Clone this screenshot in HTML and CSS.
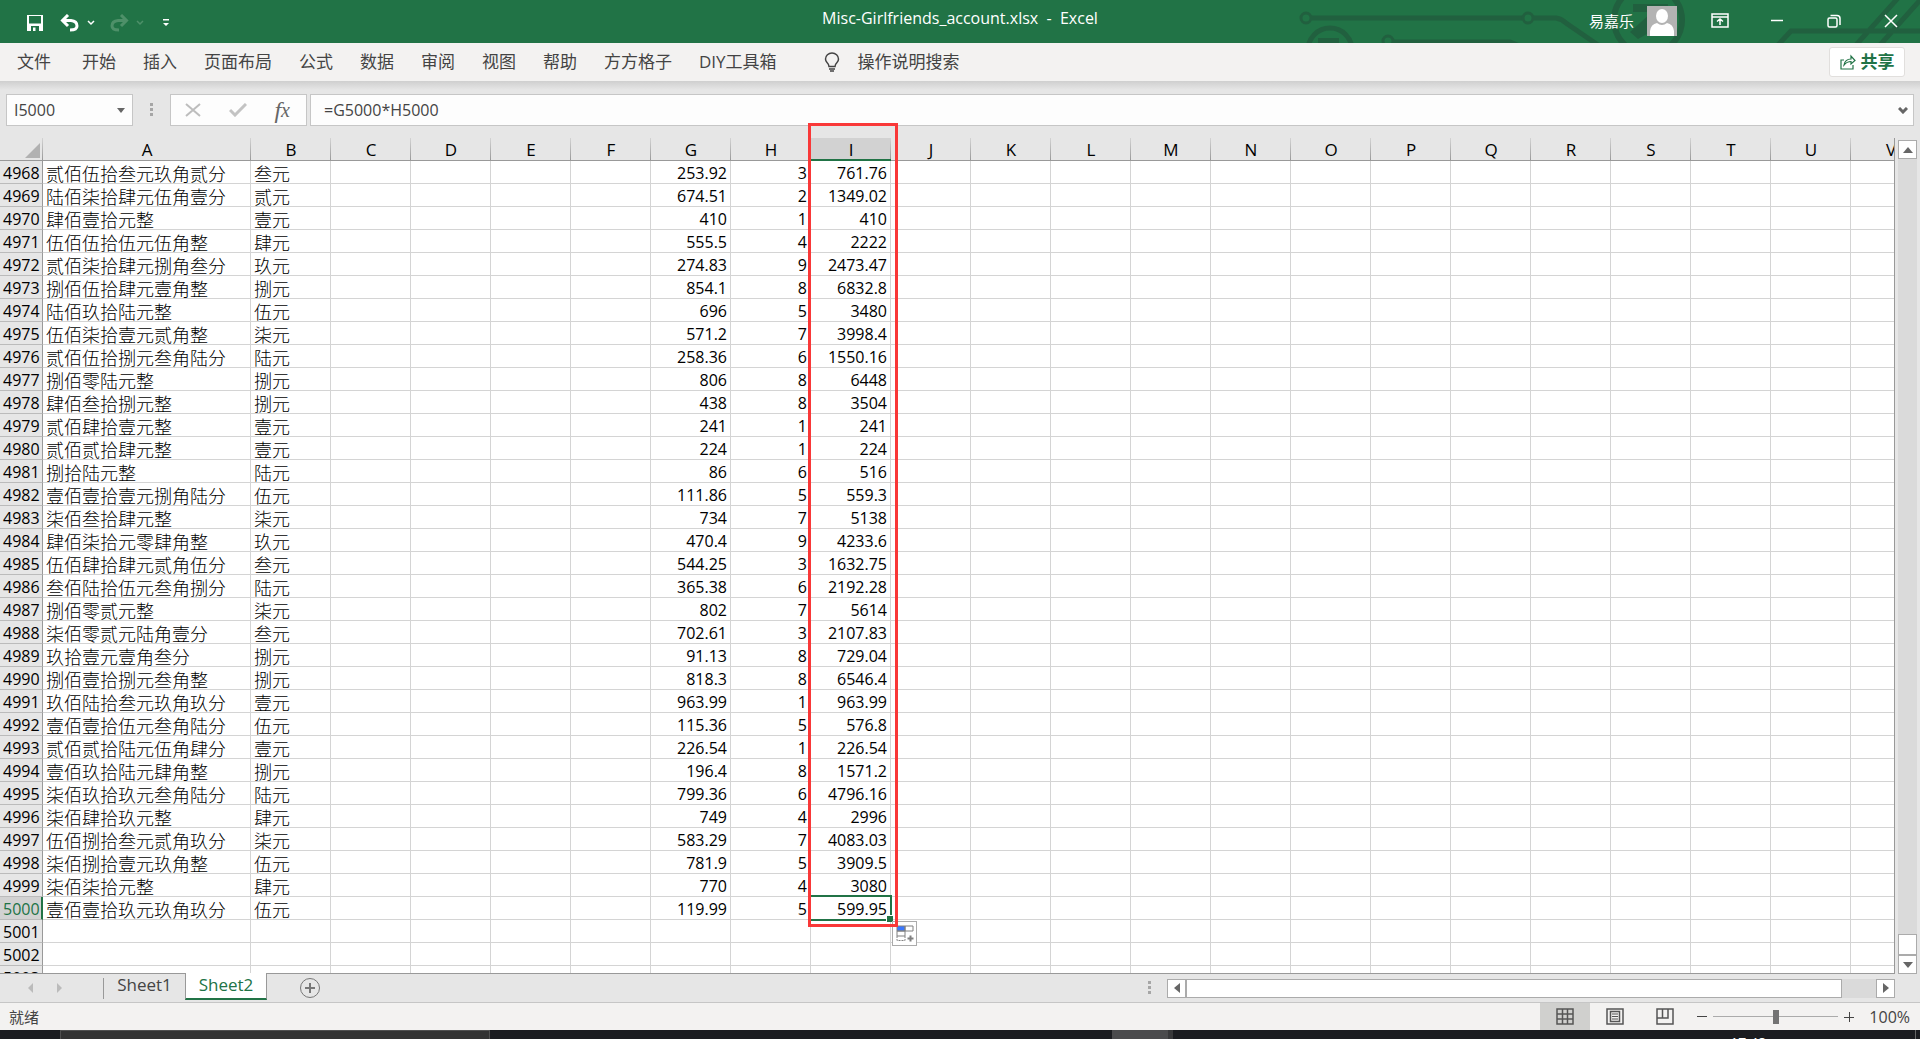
FILE: index.html
```html
<!DOCTYPE html>
<html lang="zh-CN">
<head>
<meta charset="utf-8">
<title>Misc-Girlfriends_account.xlsx - Excel</title>
<link rel="stylesheet" href="styles.css">
</head>
<body>
<header class="titlebar">
  <svg class="circuit" viewBox="0 0 640 43" width="640" height="43" fill="none" stroke="#21603f" stroke-width="5" aria-hidden="true">
    <circle cx="26" cy="18" r="5" stroke-width="3"/><path d="M32 18H242"/><circle cx="248" cy="18" r="5" stroke-width="3"/><path d="M254 18H276Q282 19 286 23L318 45"/>
    <circle cx="50" cy="50" r="22"/><path d="M38 38H59V43H38Z" fill="#21603f" stroke="none"/>
    <circle cx="108" cy="41" r="5" stroke-width="3"/><path d="M114 42H230L244 48"/>
    <circle cx="368" cy="20" r="34" stroke-width="6"/><path d="M353 4H388V22L358 39L350 32L372 12H353Z" fill="#21603f" stroke="none"/>
    <path d="M498 45L511 31H640M576 45L618 -2M600 45L642 -2"/>
  </svg>
  <div class="quick">
    <button aria-label="保存"><svg width="18" height="18" viewBox="0 0 18 18"><path d="M1 1H17V17H1Z" fill="#fff"/><path d="M3 2H15V9.500H3ZM5 12H13V17H5Z" fill="#217346"/><path d="M7 13.500H9.500V17H7Z" fill="#fff"/></svg></button>
    <button class="undo" aria-label="撤消"><svg width="20" height="18" viewBox="0 0 20 18" fill="none" stroke="#fff" stroke-width="3"><path d="M3 6.500H11Q17 7 17 12Q17 16 10 16"/><path d="M8 1L2.500 6.500L8 12"/></svg></button>
    <button aria-label="撤消列表"><svg width="8" height="6" viewBox="0 0 8 6" fill="none" stroke="#fff" stroke-width="1.500"><path d="M1 1L4 4L7 1"/></svg></button>
    <button class="redo" aria-label="恢复" disabled><svg width="20" height="18" viewBox="0 0 20 18" fill="none" stroke="#4e9069" stroke-width="3"><path d="M17 6.500H9Q3 7 3 12Q3 16 10 16"/><path d="M12 1L17.500 6.500L12 12"/></svg></button>
    <button aria-label="恢复列表" disabled><svg width="8" height="6" viewBox="0 0 8 6" fill="none" stroke="#4e9069" stroke-width="1.500"><path d="M1 1L4 4L7 1"/></svg></button>
    <button class="custom" aria-label="自定义快速访问工具栏"><svg width="8" height="8" viewBox="0 0 8 8" fill="#fff"><path d="M1 0H7V1.500H1ZM1 4H7L4 7Z"/></svg></button>
  </div>
  <div class="doc-title">Misc-Girlfriends_account.xlsx&nbsp; -&nbsp; Excel</div>
  <div class="window-tools">
    <span class="user">易嘉乐</span>
    <svg class="avatar" width="30" height="30" viewBox="0 0 30 30"><path d="M0 0H30V30H0Z" fill="#b3b3b3"/><ellipse cx="15" cy="10" rx="6" ry="7" fill="#fff"/><path d="M3 30V25Q4 18 10 17Q15 21 20 17Q26 18 27 25V30Z" fill="#fff"/></svg>
    <button aria-label="功能区显示选项"><svg width="18" height="16" viewBox="0 0 18 16" fill="none" stroke="#fff" stroke-width="1.500"><path d="M1 1H17V14H1ZM1 4H17M9 12V6M6 8.500L9 6L12 8.500"/></svg></button>
    <button aria-label="最小化"><svg width="14" height="14" viewBox="0 0 14 14" stroke="#fff" stroke-width="1.500"><path d="M1 6.500H13"/></svg></button>
    <button aria-label="还原"><svg width="14" height="14" viewBox="0 0 14 14" fill="none" stroke="#fff" stroke-width="1.500"><rect x="1" y="4" width="9" height="9" rx="1.500"/><path d="M3.500 1.500H10Q13 1.500 13 4.500V11"/></svg></button>
    <button aria-label="关闭"><svg width="14" height="14" viewBox="0 0 14 14" stroke="#fff" stroke-width="1.500"><path d="M1 1L13 13M13 1L1 13"/></svg></button>
  </div>
</header>
<nav class="ribbon">
  <button class="file">文件</button><button>开始</button><button>插入</button><button>页面布局</button><button>公式</button><button>数据</button><button>审阅</button><button>视图</button><button>帮助</button><button>方方格子</button><button>DIY工具箱</button>
  <button class="tell"><svg width="16" height="20" viewBox="0 0 16 20" fill="none" stroke="#444" stroke-width="1.500"><path d="M5 14.500Q5 12.500 3 10.500Q1.500 9 1.500 7A6.500 6 0 0 1 14.500 7Q14.500 9 13 10.500Q11 12.500 11 14.500ZM5 17H11M6 19H10"/></svg>操作说明搜索</button>
  <button class="share"><svg width="16" height="16" viewBox="0 0 16 16" fill="none" stroke="#217346" stroke-width="1.200"><path d="M4 6H1V15H13V11M4 11Q5 5 11 5V2L15 6.500L11 10V7.500Q7 7.500 4 11Z"/></svg>共享</button>
</nav>
<div class="formula-row">
  <div class="namebox"><input value="I5000" aria-label="名称框"><button aria-label="名称列表"><svg width="8" height="5" viewBox="0 0 8 5" fill="#666"><path d="M0 0H8L4 5Z"/></svg></button></div>
  <span class="dots"></span>
  <div class="fxbox">
    <button aria-label="取消"><svg width="16" height="14" viewBox="0 0 16 14" stroke="#bdbdbd" stroke-width="2"><path d="M1 1L15 13M15 1L1 13"/></svg></button>
    <button aria-label="输入"><svg width="18" height="14" viewBox="0 0 18 14" fill="none" stroke="#c3c3c3" stroke-width="3"><path d="M1 7L6 12L17 1"/></svg></button>
    <button class="fx" aria-label="插入函数">f<span>x</span></button>
  </div>
  <div class="formula"><input value="=G5000*H5000" aria-label="编辑栏"><button aria-label="展开编辑栏"><svg width="10" height="7" viewBox="0 0 10 7" fill="none" stroke="#666" stroke-width="3"><path d="M1 1L5 5L9 1"/></svg></button></div>
</div>
<main class="workspace">
  <div class="sheet">
    <div class="viewport"><table class="cells"><colgroup id="cols"></colgroup><thead><tr id="letters"></tr></thead><tbody id="rows"></tbody></table></div>
    <div class="selection"></div>
    <button class="autofill" aria-label="自动填充选项"><svg width="18" height="17" viewBox="0 0 18 17" fill="none" stroke="#808080"><path d="M1 1H9V6H1Z" fill="#3b78ff"/><path d="M9 1H17V6H9ZM1 6H9V11H1Z"/><path d="M1 11V15.500H9V11" stroke-dasharray="2 1"/><path d="M14.500 10.500V16.500M11.500 13.500H17.500" stroke-width="2"/></svg></button>
    <div class="callout"></div>
  </div>
  <div class="vscroll">
    <button aria-label="向上"><svg width="10" height="6" viewBox="0 0 10 6" fill="#666"><path d="M0 6H10L5 0Z"/></svg></button>
    <span class="vtrack"><span class="vthumb"></span></span>
    <button aria-label="向下"><svg width="10" height="6" viewBox="0 0 10 6" fill="#666"><path d="M0 0H10L5 6Z"/></svg></button>
  </div>
</main>
<div class="tabbar">
  <div class="tab-nav"><button aria-label="上一张"><svg width="5" height="10" viewBox="0 0 5 10" fill="#bbb"><path d="M5 0V10L0 5Z"/></svg></button><button aria-label="下一张"><svg width="5" height="10" viewBox="0 0 5 10" fill="#bbb"><path d="M0 0V10L5 5Z"/></svg></button></div>
  <button class="tab">Sheet1</button><button class="tab active">Sheet2</button>
  <button class="add" aria-label="新工作表"><svg width="22" height="22" viewBox="0 0 22 22" fill="none" stroke="#777"><circle cx="11" cy="11" r="9.500"/><path d="M11 6V16M6 11H16" stroke-width="2"/></svg></button>
  <span class="dots"></span>
  <div class="hscroll">
    <button aria-label="向左"><svg width="6" height="10" viewBox="0 0 6 10" fill="#666"><path d="M6 0V10L0 5Z"/></svg></button>
    <span class="htrack"><span class="hthumb"></span></span>
    <button aria-label="向右"><svg width="6" height="10" viewBox="0 0 6 10" fill="#666"><path d="M0 0V10L6 5Z"/></svg></button>
  </div>
</div>
<footer class="status">
  <span>就绪</span>
  <div class="views">
    <button class="on" aria-label="普通"><svg width="18" height="17" viewBox="0 0 18 17" fill="none" stroke="#555" stroke-width="1.500"><path d="M1 1H17V16H1ZM1 6H17M1 11H17M6.500 1V16M11.500 1V16"/></svg></button>
    <button aria-label="页面布局"><svg width="18" height="17" viewBox="0 0 18 17" fill="none" stroke="#555" stroke-width="1.500"><path d="M1 1H17V16H1ZM4.500 3.500H13.500V13.500H4.500Z"/><path d="M6 6H12M6 8.500H12M6 11H12" stroke-width="1"/></svg></button>
    <button aria-label="分页预览"><svg width="18" height="17" viewBox="0 0 18 17" fill="none" stroke="#555" stroke-width="1.500"><path d="M1 1H17V16H1ZM1 10H12V1M6.500 1V10"/></svg></button>
  </div>
  <div class="zoom"><button aria-label="缩小"><svg width="10" height="10" stroke="#444"><path d="M0 4.500H10"/></svg></button><input type="range" min="0" max="100" value="50" aria-label="缩放"><button aria-label="放大"><svg width="10" height="10" stroke="#444"><path d="M0 5.500H10M5.500 0V10"/></svg></button></div>
  <span class="percent">100%</span>
</footer>
<div class="taskbar"><span class="task-search"></span><span class="task-app"></span><span class="clock">17:48</span><span class="peek"></span></div>
<script src="sheet.js"></script>
</body>
</html>
```
FILE: styles.css
```css
* { box-sizing: border-box; }
body { margin: 0; height: 100vh; display: flex; flex-direction: column; overflow: hidden; background: #e6e6e6; color: #444; font: 16px/22px "Open Sans", "Noto Sans CJK SC", sans-serif; }
button { border: 0; padding: 0; background: none; color: inherit; font: inherit; display: flex; align-items: center; justify-content: center; white-space: nowrap; }
input { border: 0; padding: 0; margin: 0; background: none; color: inherit; font: inherit; min-width: 0; }
svg { display: block; flex: none; }

.titlebar { flex: none; height: 43px; background: #217346; color: #fff; position: relative; display: grid; grid-template-columns: 1fr auto 1fr; align-items: center; }
.circuit { position: absolute; right: 0; top: 0; }
.quick { display: flex; align-items: center; padding: 2px 0 0 26px; }
.quick .undo { margin-left: 16px; }
.quick .undo + button, .quick .redo + button { margin-left: 7px; }
.quick .redo { margin-left: 14px; }
.quick .custom { margin-left: 18px; }
.doc-title { font-size: 16px; padding-bottom: 8px; }
.window-tools { display: flex; align-items: center; justify-content: flex-end; position: relative; padding: 0 20px 1px 0; }
.window-tools button { width: 18px; margin-left: 39px; }
.window-tools .avatar + button { margin-left: 34px; }
.user { font-size: 15px; margin-right: 13px; }

.ribbon { flex: none; height: 38px; background: #f3f2f1; display: flex; align-items: center; gap: 27px; padding: 0 15px 0 17px; font-size: 17px; }
.ribbon .file { margin-right: 4px; }
.ribbon .tell { gap: 18px; margin-left: 20px; }
.ribbon .share { margin-left: auto; width: 76px; height: 30px; background: #fff; border: 1px solid #e1dfdd; border-radius: 3px; color: #217346; font-weight: 700; gap: 5px; }

.formula-row { flex: none; display: flex; align-items: center; padding: 13px 6px 12px; background: linear-gradient(#cfcfcf, #e6e6e6 9px); }
.namebox, .fxbox, .formula { height: 32px; background: #fdfdfd; border: 1px solid #c6c6c6; display: flex; align-items: center; }
.namebox { width: 127px; padding: 0 7px; }
.namebox input, .formula input { flex: 1; }
.dots { width: 3px; height: 14px; background: repeating-linear-gradient(#a6a6a6 0 3px, transparent 3px 5px); }
.formula-row .dots { margin: 0 17px; }
.fxbox { width: 137px; padding: 0 16px 0 14px; justify-content: space-between; }
.fx { font: italic 24px/26px "Liberation Serif", serif; color: #666; }
.fx span { font-size: 20px; }
.formula { flex: 1; margin-left: 3px; padding: 0 5px 0 13px; }

.workspace { flex: 1; min-height: 0; display: flex; }
.sheet { flex: 1; min-width: 0; position: relative; border-right: 1px solid #999; border-bottom: 1px solid #999; }
.viewport { height: 100%; overflow: hidden; }
.cells { table-layout: fixed; border-collapse: separate; border-spacing: 0; width: 1931px; color: #000; background: #fff; }
.cells .num-col { width: 43px; }
.cells .wide-col { width: 208px; }
.cells .col { width: 80px; }
.cells th, .cells td { padding: 2px 3px 0; height: 23px; line-height: 20px; font-weight: 400; border-right: 1px solid #d4d4d4; border-bottom: 1px solid #d4d4d4; white-space: nowrap; }
.cells thead th { background: linear-gradient(#d4d4d4, #999) right / 1px 100% no-repeat #e6e6e6; border-right: 0; border-bottom-color: #999; font-size: 17px; }
.cells thead .sel { background-color: #d2d2d2; border-bottom: 2px solid #217346; line-height: 19px; }
.cells .corner svg { margin-left: auto; }
.cells tbody th { background: #e6e6e6; text-align: right; border-right-color: #999; border-bottom-color: #bbb; }
.cells tbody .sel { background: #d2d2d2; color: #217346; border-right: 2px solid #217346; padding-right: 2px; }
.cells .text { font-size: 18px; font-weight: 300; font-family: "Noto Sans CJK SC", sans-serif; }
.cells .number { text-align: right; }
.selection { position: absolute; left: 809px; top: 757px; width: 83px; height: 26px; border: 2px solid #217346; }
.selection::after { content: ""; position: absolute; right: -3px; bottom: -3px; width: 6px; height: 6px; background: #217346; border: 1px solid #fff; border-width: 1px 0 0 1px; }
.autofill { position: absolute; left: 892px; top: 783px; width: 25px; height: 25px; background: #fff; border: 1px solid #ababab; }
.callout { position: absolute; left: 808px; top: -15px; width: 90px; height: 804px; border: 3px solid #f93838; }
.vscroll { flex: none; width: 25px; padding: 2px 3px 0; display: flex; flex-direction: column; }
.vscroll button { height: 19px; background: #fff; border: 1px solid #ababab; }
.vtrack { flex: 1; background: #dadada; display: flex; flex-direction: column; justify-content: flex-end; }
.vthumb { height: 21px; background: #fff; border: 1px solid #ababab; }

.tabbar { flex: none; height: 29px; display: flex; align-items: center; border-bottom: 1px solid #c6c6c6; padding-right: 25px; }
.tab-nav { width: 104px; height: 21px; border-right: 1px solid #999; display: flex; gap: 24px; padding-left: 28px; }
.tab { width: 81px; height: 26px; align-self: flex-start; font-size: 17px; padding-bottom: 4px; }
.tab.active { width: 82px; background: #fff; color: #217346; border: 1px solid #999; border-top: 0; border-bottom: 2px solid #217346; padding-bottom: 2px; margin-top: -1px; height: 27px; position: relative; }
.add { margin-left: 32px; }
.tabbar > .dots { margin: 0 16px 0 auto; }
.hscroll { width: 38.4%; height: 19px; display: flex; }
.hscroll button { width: 19px; background: #fff; border: 1px solid #ababab; }
.htrack { flex: 1; background: #dadada; display: flex; }
.hthumb { width: 95%; background: #fff; border: 1px solid #ababab; }

.status { flex: none; height: 27px; background: #f3f2f1; display: flex; align-items: center; padding: 0 10px 0 9px; font-size: 15px; }
.views { margin-left: auto; display: flex; align-self: stretch; }
.views button { width: 50px; }
.views .on { background: #d0d0ce; }
.zoom { display: flex; align-items: center; gap: 6px; margin-left: 7px; }
.zoom input { appearance: none; width: 125px; height: 14px; background: linear-gradient(#ababab, #ababab) center / 100% 1px no-repeat; }
.zoom input::-webkit-slider-thumb { appearance: none; width: 6px; height: 14px; background: #737373; }
.percent { width: 56px; text-align: right; font-size: 16px; }

.taskbar { flex: none; height: 9px; background: #1b1c20; display: flex; overflow: hidden; color: #fff; }
.task-search { width: 430px; margin-left: 60px; background: #333; border: 1px solid #505050; border-bottom: 0; }
.task-app { width: 61px; margin-left: 622px; background: #4b4b4d; border-right: 5px solid #38383a; }
.clock { margin-left: auto; font-size: 14px; line-height: 22px; padding-top: 2px; }
.peek { width: 5px; margin-left: 149px; border-left: 1px solid #666; }
```
FILE: sheet.js
```js
const letters = "ABCDEFGHIJKLMNOPQRSTUV".split("");
const data = `贰佰伍拾叁元玖角贰分,叁元,253.92,3,761.76
陆佰柒拾肆元伍角壹分,贰元,674.51,2,1349.02
肆佰壹拾元整,壹元,410,1,410
伍佰伍拾伍元伍角整,肆元,555.5,4,2222
贰佰柒拾肆元捌角叁分,玖元,274.83,9,2473.47
捌佰伍拾肆元壹角整,捌元,854.1,8,6832.8
陆佰玖拾陆元整,伍元,696,5,3480
伍佰柒拾壹元贰角整,柒元,571.2,7,3998.4
贰佰伍拾捌元叁角陆分,陆元,258.36,6,1550.16
捌佰零陆元整,捌元,806,8,6448
肆佰叁拾捌元整,捌元,438,8,3504
贰佰肆拾壹元整,壹元,241,1,241
贰佰贰拾肆元整,壹元,224,1,224
捌拾陆元整,陆元,86,6,516
壹佰壹拾壹元捌角陆分,伍元,111.86,5,559.3
柒佰叁拾肆元整,柒元,734,7,5138
肆佰柒拾元零肆角整,玖元,470.4,9,4233.6
伍佰肆拾肆元贰角伍分,叁元,544.25,3,1632.75
叁佰陆拾伍元叁角捌分,陆元,365.38,6,2192.28
捌佰零贰元整,柒元,802,7,5614
柒佰零贰元陆角壹分,叁元,702.61,3,2107.83
玖拾壹元壹角叁分,捌元,91.13,8,729.04
捌佰壹拾捌元叁角整,捌元,818.3,8,6546.4
玖佰陆拾叁元玖角玖分,壹元,963.99,1,963.99
壹佰壹拾伍元叁角陆分,伍元,115.36,5,576.8
贰佰贰拾陆元伍角肆分,壹元,226.54,1,226.54
壹佰玖拾陆元肆角整,捌元,196.4,8,1571.2
柒佰玖拾玖元叁角陆分,陆元,799.36,6,4796.16
柒佰肆拾玖元整,肆元,749,4,2996
伍佰捌拾叁元贰角玖分,柒元,583.29,7,4083.03
柒佰捌拾壹元玖角整,伍元,781.9,5,3909.5
柒佰柒拾元整,肆元,770,4,3080
壹佰壹拾玖元玖角玖分,伍元,119.99,5,599.95`.split("\n").map(line => line.split(","));
const fields = { A: 0, B: 1, G: 2, H: 3, I: 4 };

document.getElementById("cols").innerHTML = '<col class="num-col"><col class="wide-col">' + '<col class="col">'.repeat(letters.length - 1);
document.getElementById("letters").innerHTML =
  '<th class="corner"><svg width="15" height="15" viewBox="0 0 15 15" fill="#b1b1b1"><path d="M15 0V15H0Z"/></svg></th>' +
  letters.map(l => `<th${l === "I" ? ' class="sel"' : ""}>${l}</th>`).join("");

let html = "";
for (let n = 4968; n <= 5003; n++) {
  const row = data[n - 4968] || [];
  html += `<tr><th${n === 5000 ? ' class="sel"' : ""}>${n}</th>`;
  for (const l of letters) {
    const kind = l === "A" || l === "B" ? "text" : "number";
    html += l in fields ? `<td class="${kind}">${row[fields[l]] || ""}</td>` : "<td></td>";
  }
  html += "</tr>";
}
document.getElementById("rows").innerHTML = html;
```
